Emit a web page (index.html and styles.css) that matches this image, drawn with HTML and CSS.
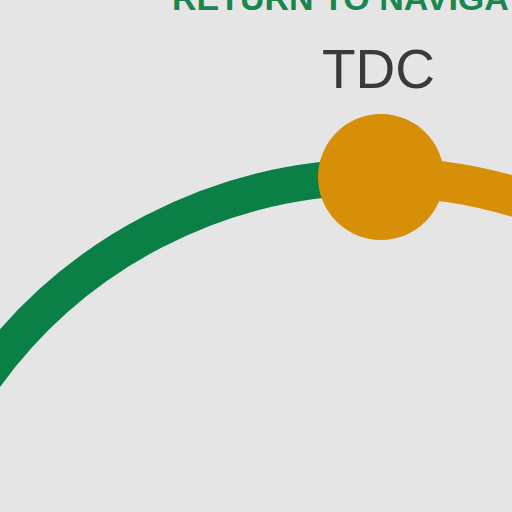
FILE: index.html
```html
<!DOCTYPE html>
<html>
<head>
<meta charset="utf-8">
<link rel="stylesheet" href="styles.css">
</head>
<body>
<div class="page">
  <h1 class="return-link">RETURN TO NAVIGATION</h1>
  <svg class="diagram" width="512" height="512" viewBox="0 0 512 512">
    <path class="arc-green" d="M -20 384 A 483 483 0 0 1 378 177"/>
    <path class="arc-orange" d="M 378 177 A 483 483 0 0 1 540 205"/>
    <circle class="node" cx="381" cy="177" r="63"/>
    <text class="node-label" x="322" y="88">TDC</text>
  </svg>
</div>
</body>
</html>
```
FILE: styles.css
```css
html, body {
  margin: 0;
  padding: 0;
  width: 512px;
  height: 512px;
  overflow: hidden;
  background: #e5e5e5;
}
.page {
  position: relative;
  display: flow-root;
  width: 512px;
  height: 512px;
}
.return-link {
  margin: -19px 0 0 0;
  padding-left: 172px;
  font-family: "Liberation Sans", Arial, sans-serif;
  font-weight: 700;
  font-size: 34px;
  line-height: 34px;
  color: #17864f;
  white-space: nowrap;
}
.diagram {
  position: absolute;
  left: 0;
  top: 0;
}
.arc-green {
  fill: none;
  stroke: #0a8046;
  stroke-width: 36;
}
.arc-orange {
  fill: none;
  stroke: #d78f08;
  stroke-width: 40;
}
.node {
  fill: #d78f08;
}
.node-label {
  font-family: "Liberation Sans", Arial, sans-serif;
  font-size: 55px;
  fill: #3a3a3a;
}
```
